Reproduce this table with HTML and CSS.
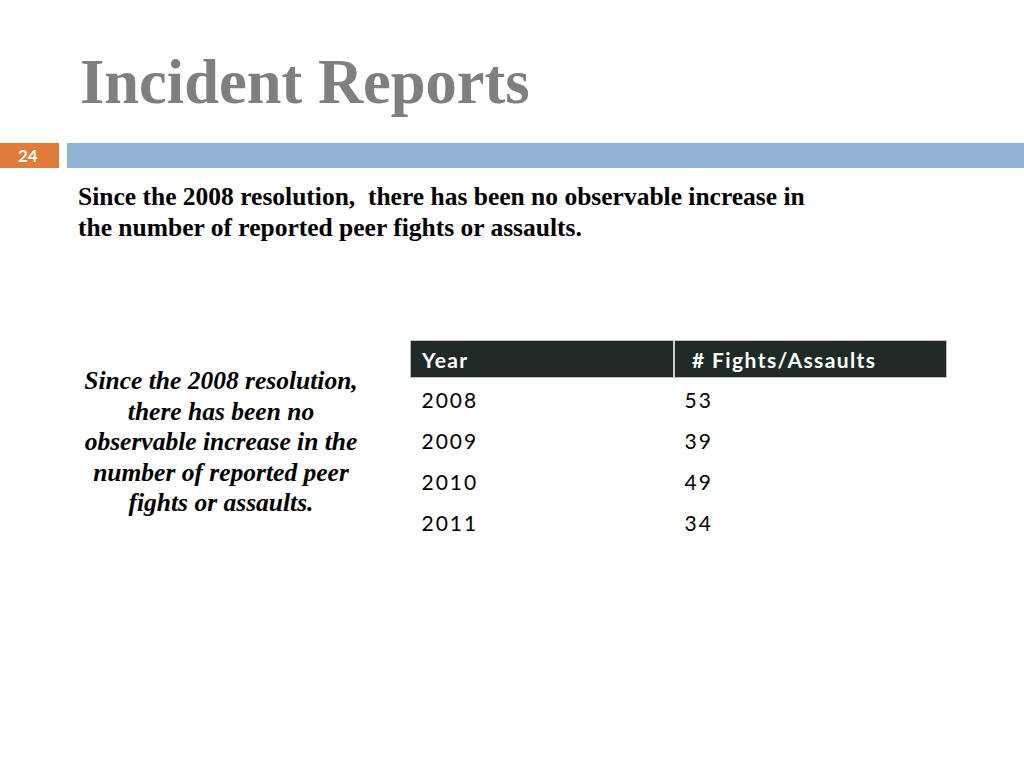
FILE: index.html
```html
<!DOCTYPE html>
<html>
<head>
<meta charset="utf-8">
<link rel="stylesheet" href="styles.css">
</head>
<body>
<div class="slide">
  <h1 class="title">Incident Reports</h1>
  <div class="bar">
    <div class="num">24</div>
    <div class="band"></div>
  </div>
  <p class="lead">Since the 2008 resolution,&nbsp; there has been no observable increase in<br>the number of reported peer fights or assaults.</p>
  <div class="content">
    <p class="quote">Since the 2008 resolution, there has been no observable increase in the number of reported peer fights or assaults.</p>
    <table class="data">
      <thead>
        <tr><th class="c1">Year</th><th class="c2">&nbsp;# Fights/Assaults</th></tr>
      </thead>
      <tbody>
        <tr><td>2008</td><td>53</td></tr>
        <tr><td>2009</td><td>39</td></tr>
        <tr><td>2010</td><td>49</td></tr>
        <tr><td>2011</td><td>34</td></tr>
      </tbody>
    </table>
  </div>
</div>
</body>
</html>
```

FILE: styles.css
```css
* { box-sizing: border-box; }
html, body { margin: 0; padding: 0; background: #ffffff; }
.slide {
  width: 1024px;
  height: 768px;
  overflow: hidden;
  background: #ffffff;
  font-family: "Liberation Serif", "Times New Roman", serif;
}
.title {
  margin: 51px 0 0 80px;
  font-size: 62.5px;
  line-height: 62px;
  font-weight: bold;
  color: #7f7f7f;
}
.bar {
  display: flex;
  gap: 8px;
  margin-top: 30px;
  height: 25px;
}
.num {
  width: 59px;
  background: #e07b39;
  color: #ffffff;
  font-family: Lato, "Open Sans", sans-serif;
  font-weight: bold;
  font-size: 17px;
  line-height: 25px;
  padding-left: 18px;
}
.band {
  flex: 1;
  background: #91b4d4;
}
.lead {
  margin: 14px 0 0 78px;
  font-size: 25.5px;
  line-height: 30.5px;
  font-weight: bold;
  color: #000000;
}
.content {
  display: flex;
  align-items: flex-start;
  margin-top: 97px;
}
.quote {
  width: 286px;
  margin: 26px 0 0 78px;
  text-align: center;
  font-size: 25.5px;
  line-height: 30.5px;
  font-weight: bold;
  font-style: italic;
  color: #000000;
}
.data {
  margin-left: 46px;
  border-collapse: collapse;
  font-family: Lato, "Open Sans", sans-serif;
  font-size: 21px;
  letter-spacing: 2px;
  color: #000000;
}
.data th {
  background: #1f2a27;
  color: #ffffff;
  font-weight: bold;
  letter-spacing: 1.4px;
  text-align: left;
  height: 37px;
  padding: 0 11px;
  border: 1px solid #b9c0be;
}
.data th.c1 { width: 263px; border-right: 2px solid #c8cecc; }
.data th.c2 { width: 273px; }
.data td {
  height: 41px;
  padding: 3px 11px 0;
  vertical-align: middle;
}
```
